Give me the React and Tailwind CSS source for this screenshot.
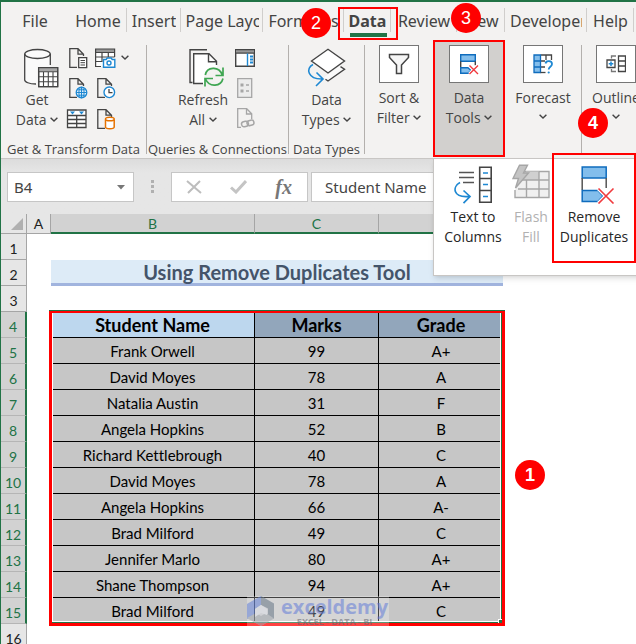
import React, { useState } from 'react';

const students = [
  { name: 'Frank Orwell', marks: 99, grade: 'A+' },
  { name: 'David Moyes', marks: 78, grade: 'A' },
  { name: 'Natalia Austin', marks: 31, grade: 'F' },
  { name: 'Angela Hopkins', marks: 52, grade: 'B' },
  { name: 'Richard Kettlebrough', marks: 40, grade: 'C' },
  { name: 'David Moyes', marks: 78, grade: 'A' },
  { name: 'Angela Hopkins', marks: 66, grade: 'A-' },
  { name: 'Brad Milford', marks: 49, grade: 'C' },
  { name: 'Jennifer Marlo', marks: 80, grade: 'A+' },
  { name: 'Shane Thompson', marks: 94, grade: 'A+' },
  { name: 'Brad Milford', marks: 49, grade: 'C' },
];

const tabs = [
  { label: 'File', width: 'w-[68px]', line: false },
  { label: 'Home', width: 'w-[58px]', line: true },
  { label: 'Insert', width: 'w-[54px]', line: true },
  { label: 'Page Layout', width: 'w-[82px]', line: true, clip: 'w-[73px]' },
  { label: 'Formulas', width: 'w-[81px]', line: true, step: 2 },
  { label: 'Data', width: 'w-[47px]', line: true, active: true },
  { label: 'Review', width: 'w-[66px]', line: true },
  { label: 'View', width: 'w-[48px]', line: true, step: 3 },
  { label: 'Developer', width: 'w-[82px]', line: true, clip: 'w-[72px]' },
  { label: 'Help', width: 'w-[47px]', line: true },
];

const Step = ({ n, className }) => (
  <span
    className={`absolute z-30 flex size-[30px] items-center justify-center rounded-full bg-[#ff0000] font-['Liberation_Sans',sans-serif] text-[18px] text-white ${className}`}
  >
    {n}
  </span>
);

const Chevron = ({ className = '' }) => (
  <svg width="8" height="5" viewBox="0 0 8 5" className={`inline-block ${className}`} fill="none" stroke="#444" strokeWidth="1.4">
    <path d="M.6.7 4 4 7.4.7" />
  </svg>
);

/* ---------- ribbon icons ---------- */

const Page = () => <path d="M8 19.3H.8V.7H9l5.5 5.5V8M9 .7v5.5h5.500" fill="none" stroke="#444" strokeWidth="1.3" />;

const Small = ({ children }) => (
  <svg width="20" height="20" viewBox="0 0 20 20" fill="none" className="overflow-visible">
    {children}
  </svg>
);

const DatabaseIcon = () => (
  <svg width="36" height="40" viewBox="0 0 36 40" fill="none" stroke="#444" strokeWidth="1.3">
    <path d="M1.7 6v25.500c0 2.500 5 4.500 12.500 4.500V19h13V6" fill="#fafafa" stroke="none" />
    <ellipse cx="14.500" cy="6" rx="12.800" ry="4.500" fill="#fafafa" />
    <path d="M1.700 6v26c0 2 4.500 4 11.300 4M27.300 6v11" />
    <path d="M15.700 19.700h19v19h-19z" fill="#fff" />
    <path d="M16 20h18.500v3.500H16z" fill="#a8a8a8" stroke="none" />
    <path d="M15.700 19.700h19v19h-19zM15.700 23.700h19M15.700 28.700h19M15.700 33.700h19M20.500 23.700v15M25.300 23.700v15M30 23.700v15" strokeWidth="1.100" />
  </svg>
);

const TextFileIcon = () => (
  <Small>
    <Page />
    <path d="M9.700 9.700h8v10h-8z" fill="#fff" stroke="#444" strokeWidth="1.300" />
    <path d="M11.500 12.500h4.500M11.500 14.700h4.500M11.500 17h4.500" stroke="#444" />
  </Small>
);

const PictureIcon = () => (
  <Small>
    <path d="M.6 1.500h19v17H.6z" fill="#fff" />
    <path d="M.6 1h19v3H.6z" fill="#999" />
    <path d="M6 18.500H.6V1h19v8M.6 4.500h19M.6 9h19M.6 13.500h6M7 4.500V9M13.300 4.500V9M7 9v5" stroke="#444" strokeWidth="1.200" />
    <path d="M8.500 11.500h2.700l1-1.500h4l1 1.500h2.600v7.700H8.500z" fill="#fff" stroke="#1e88d2" strokeWidth="1.400" />
    <circle cx="14" cy="15" r="2" stroke="#1e88d2" strokeWidth="1.400" />
  </Small>
);

const WebIcon = () => (
  <Small>
    <Page />
    <circle cx="12.500" cy="14.500" r="6.300" fill="#f3f2f1" />
    <circle cx="12.500" cy="14.500" r="5.300" fill="#e3f1fb" stroke="#1e88d2" strokeWidth="1.300" />
    <path d="M7.300 14.500h10.500M8.300 11.800h8.500M8.300 17.200h8.500M12.500 9v11" stroke="#1e88d2" />
    <ellipse cx="12.500" cy="14.500" rx="2.600" ry="5.300" stroke="#1e88d2" />
  </Small>
);

const RecentIcon = () => (
  <Small>
    <g transform="translate(2 0)">
      <Page />
      <circle cx="12.300" cy="14.300" r="6.300" fill="#f3f2f1" />
      <circle cx="12.300" cy="14.300" r="5.300" fill="#fff" stroke="#1e88d2" strokeWidth="1.400" />
      <path d="M12 11v3.700h3.500" stroke="#444" strokeWidth="1.300" />
    </g>
  </Small>
);

const RangeIcon = () => (
  <Small>
    <path d="M-1.500 1h18.500v17.500H-1.500z" fill="#fff" stroke="#444" strokeWidth="1.300" />
    <path d="M-1.500 6.500H17M-1.500 10.500H17M-1.500 14.500H17M7.700 6.500v12" stroke="#444" strokeWidth="1.300" />
    <path d="M1 2.500h5L3.500 5.500zM10 2.500h5l-2.500 3z" fill="#1e88d2" />
  </Small>
);

const ConnectionIcon = () => (
  <Small>
    <g transform="translate(2 0)">
      <Page />
      <path d="M8.500 10.500v7.500c0 2.300 8.700 2.300 8.700 0v-7.500" fill="#fff" stroke="#e57200" strokeWidth="1.500" />
      <ellipse cx="12.850" cy="10" rx="4.350" ry="1.800" fill="#fff" stroke="#e57200" strokeWidth="1.500" />
    </g>
  </Small>
);

const RefreshIcon = () => (
  <svg width="36" height="40" viewBox="0 0 36 40" fill="none" stroke="#444" strokeWidth="1.400">
    <path d="M3.500 34.500H1V1.700h17" />
    <path d="M5 36V5.700h15l8 8V20L15 36z" fill="#fff" stroke="none" />
    <path d="M14 35.500H4.700V5.700H20l7.500 7.500V17M19.500 5.700v8h8" />
    <circle cx="25" cy="29" r="10" fill="#f3f2f1" stroke="none" />
    <path d="M16.300 27c1.500-8 13.500-9.500 17 0M34 19.500v8h-7.500M34 30.500c-2 8-13.500 9.500-17.500.5M16 38.500v-8h8" stroke="#3fa652" strokeWidth="1.700" />
  </svg>
);

const PaneIcon = () => (
  <Small>
    <path d="M.7 1.700h18.600v16.600H.7z" fill="#fff" stroke="#444" strokeWidth="1.400" />
    <path d="M1 2h18v3H1z" fill="#999" />
    <path d="M.7 1.700h18.600M.7 5.200h18.600" stroke="#444" strokeWidth="1.200" />
    <path d="M12.500 5.500V18" stroke="#1e88d2" strokeWidth="1.400" />
    <path d="M15 8.500h3M15 11.500h3M15 14.500h3" stroke="#1e88d2" strokeWidth="1.800" />
  </Small>
);

const PropertiesIcon = () => (
  <Small>
    <path d="M2.700.7h14v18.600h-14z" fill="#ececec" stroke="#a6a6a6" strokeWidth="1.300" />
    <path d="M5.500 5.500h3v3h-3zM5.500 11.500h3v3h-3z" fill="#a6a6a6" />
    <path d="M11 7h3M11 13h3" stroke="#a6a6a6" strokeWidth="1.300" />
  </Small>
);

const EditLinksIcon = () => (
  <Small>
    <path d="M6 19.300H2.700V.7h9l5 5V11M11.500.7v5.300h5" stroke="#a6a6a6" strokeWidth="1.300" />
    <rect x="6.500" y="13.500" width="7" height="5" rx="2.500" transform="rotate(-15 10 16)" stroke="#a6a6a6" strokeWidth="1.500" />
    <rect x="12" y="12.500" width="7" height="5" rx="2.500" transform="rotate(-15 15 15)" stroke="#a6a6a6" strokeWidth="1.500" />
  </Small>
);

const DataTypesIcon = () => (
  <svg width="40" height="40" viewBox="0 0 40 40" fill="none" strokeWidth="1.400">
    <path d="M17 29.500 21 33l16.500-12-5-3z" fill="#fafafa" />
    <path d="M33.500 18.700l4 2.500L21 33l-2.500-1.800" stroke="#444" />
    <path d="M4.500 13 21 1.300 37.500 13 21 25z" fill="#fff" stroke="#444" />
    <path d="M6 16.500C-1.500 20 .5 31.500 15.500 31M9.500 24.500l6.500 6.500-7 7" stroke="#1e88d2" strokeWidth="1.600" />
  </svg>
);

const FunnelIcon = () => (
  <svg width="22" height="22" viewBox="0 0 22 22" fill="none" stroke="#444" strokeWidth="1.500">
    <path d="M1.500 1.500h19v3L13.500 12v8.500h-5V12l-7-7.500z" fill="#f6f6f6" />
  </svg>
);

const SmallDuplicatesIcon = () => (
  <svg width="20" height="22" viewBox="0 0 20 22" fill="none" strokeWidth="1.400">
    <path d="M1.700 1.700h14.600v6.600H1.700z" fill="#83beec" stroke="#0f6cbd" />
    <path d="M1.700 8.300v6M16.300 8.300v4" stroke="#444" />
    <path d="M1.700 14.700H9l3 2.800-3 2.800H1.700z" fill="#83beec" stroke="#0f6cbd" />
    <path d="M10.500 12.500l8.500 8.500M19 12.500L10.500 21" stroke="#fff" strokeWidth="3.400" />
    <path d="M10.500 12.500l8.500 8.500M19 12.500L10.500 21" stroke="#f03a3e" />
  </svg>
);

const DuplicatesIcon = () => (
  <svg width="34" height="38" viewBox="0 0 34 38" fill="none" strokeWidth="1.500">
    <path d="M1.200 1h24v11h-24z" fill="#83beec" stroke="#0f6cbd" />
    <path d="M1.200 12v12M25.200 12v10" stroke="#555" />
    <path d="M1.200 24.500H17l5 5.500-5 5.500H1.200z" fill="#83beec" stroke="#0f6cbd" />
    <path d="M17.500 22.500l15 15M32.500 22.500l-15 15" stroke="#fff" strokeWidth="4" />
    <path d="M17.500 22.500l15 15M32.500 22.500l-15 15" stroke="#f03a3e" strokeWidth="1.600" />
  </svg>
);

const ForecastIcon = () => (
  <svg width="20" height="20" viewBox="0 0 20 20" fill="none" strokeWidth="1.300">
    <path d="M7.500 1H18.500v5" stroke="#444" />
    <path d="M13 1v5M7.500 7H12M7.500 13H12" stroke="#444" />
    <path d="M1 1h6.500v17.500H1z" fill="#83beec" stroke="#0f6cbd" />
    <path d="M1 7h6.500M1 13h6.500" stroke="#0f6cbd" />
    <path d="M7.500 18.500h5" stroke="#444" />
    <path d="M12.500 9.500c.5-3.500 6.500-3 6.500.5 0 2.800-3.300 2.700-3.300 5.500" stroke="#1e88d2" strokeWidth="1.800" />
    <circle cx="15.700" cy="18.500" r="1.100" fill="#1e88d2" />
  </svg>
);

const OutlineIcon = () => (
  <svg width="20" height="18" viewBox="0 0 20 18" fill="none" stroke="#444" strokeWidth="1.300">
    <path d="M12.500 1h7v15.500h-7zM12.500 6h7M12.500 11h7" />
    <path d="M5.500 3.500V1H10M5.500 14v2.500H10" stroke="#777" />
    <path d="M1 5h8v7.500H1z" fill="#fff" />
    <path d="M5 6.500V11M2.700 8.700h4.600" stroke="#1e88d2" strokeWidth="1.500" />
  </svg>
);

const TextToColumnsIcon = () => (
  <svg width="38" height="38" viewBox="0 0 38 38" fill="none" strokeWidth="1.400">
    <path d="M5 6.500h15M5 11.500h15M9 16.500h11" stroke="#555" />
    <path d="M25.700 1.200h11.500v35H25.700zM25.700 12.500h11.500M25.700 24.500h11.500" stroke="#444" strokeWidth="1.600" />
    <path d="M29 7h5M29 18.500h5M29 30.500h5" stroke="#1e88d2" strokeWidth="1.600" />
    <path d="M6 16.500C-2 21-1 32 15 30.500M9.500 24.500l6.500 6-6.500 6.700" stroke="#1e88d2" strokeWidth="1.700" />
  </svg>
);

const FlashFillIcon = () => (
  <svg width="38" height="36" viewBox="0 0 38 36" fill="none" stroke="#a6a6a6" strokeWidth="1.400">
    <path d="M13 7.500h24v26H3V26" fill="#f0f0f0" />
    <path d="M14 7.500h13v8.500H10z" fill="#d0d0d0" stroke="none" />
    <path d="M10 16h27M6 25h31M27 7.500v26M14.500 16v17.500" />
    <path d="M7.500 1.200h8L11.500 9h5L3.500 24l3-9.500H1z" fill="#c4c4c4" />
  </svg>
);

const Watermark = () => (
  <div className="absolute -bottom-[3px] left-[195px] flex h-[30px] w-[142px] items-center gap-[6px] bg-white/40 opacity-65">
    <svg width="28" height="30" viewBox="0 0 28 30" className="shrink-0">
      <path d="M14 0 27 7.500v15L14 30 0 22V8z" fill="#d3d6dc" />
      <path d="M14 0v9l-6 4v8l-8 2V8z" fill="#7f98e0" />
      <path d="M14 0l13 7.500V23l-6-3.500v-7L14 9z" fill="#7f8c9a" />
      <path d="M0 22l9-5 5 3 5-3 8 5.500L14 30z" fill="#aeb4bb" />
      <path d="M8 13l6-4 6 4v6l-6-2-6 4z" fill="#e4e7ee" />
    </svg>
    <div className="flex flex-col font-['Open_Sans',sans-serif] font-bold">
      <span className="text-[20px] leading-[20px] text-[#7d93e0]">exceldemy</span>
      <span className="text-center text-[9px] leading-[9px] text-[#808088]">EXCEL - DATA - BI</span>
    </div>
  </div>
);

/* ---------- ribbon ---------- */

const Divider = () => <div className="mt-[5px] h-[109px] w-px shrink-0 bg-[#b3b0ad]" />;

const GroupLabel = ({ children }) => (
  <div className="absolute inset-x-0 bottom-0 flex h-4 items-center justify-center whitespace-nowrap text-[13px]">{children}</div>
);

const BoxedButton = ({ icon, children }) => (
  <button className="flex w-full flex-col items-center pt-[5px] leading-5">
    <span className="mb-[5px] flex h-[38px] w-10 shrink-0 items-center justify-center border border-[#767676] bg-white">{icon}</span>
    {children}
  </button>
);

const Ribbon = () => (
  <div className="relative flex h-[119px] border-b border-[#c8c6c4] font-['Open_Sans',sans-serif] text-[14px] text-[#444]">
    <div className="relative w-[145px] shrink-0">
      <div className="flex pt-[7px]">
        <button className="ml-3 flex w-[48px] flex-col items-center whitespace-nowrap leading-5">
          <span className="ml-2 mt-px"><DatabaseIcon /></span>
          <span className="mt-[2px]">Get</span>
          <span>Data <Chevron className="mb-[3px]" /></span>
        </button>
        <div className="ml-2 grid grid-cols-[20px_20px] gap-x-[6px] gap-y-[9px]">
          <button aria-label="From Text/CSV"><TextFileIcon /></button>
          <button aria-label="From Picture"><PictureIcon /></button>
          <button aria-label="From Web"><WebIcon /></button>
          <button aria-label="Recent Sources"><RecentIcon /></button>
          <button aria-label="From Table/Range"><RangeIcon /></button>
          <button aria-label="Existing Connections"><ConnectionIcon /></button>
        </div>
        <Chevron className="ml-[6px] mt-2" />
      </div>
      <GroupLabel>Get &amp; Transform Data</GroupLabel>
    </div>
    <Divider />
    <div className="relative w-[141px] shrink-0">
      <div className="flex pt-2">
        <button className="ml-[30px] flex w-[52px] flex-col items-center whitespace-nowrap leading-5">
          <span className="ml-2"><RefreshIcon /></span>
          <span className="mt-[2px]">Refresh</span>
          <span>All <Chevron className="mb-[3px]" /></span>
        </button>
        <div className="ml-[6px] flex flex-col gap-[10px]">
          <button aria-label="Queries &amp; Connections"><PaneIcon /></button>
          <button aria-label="Properties"><PropertiesIcon /></button>
          <button aria-label="Edit Links"><EditLinksIcon /></button>
        </div>
      </div>
      <GroupLabel>Queries &amp; Connections</GroupLabel>
    </div>
    <Divider />
    <div className="relative w-[75px] shrink-0">
      <button className="flex w-full flex-col items-center whitespace-nowrap pt-2 leading-5">
        <DataTypesIcon />
        <span className="mt-[2px]">Data</span>
        <span>Types <Chevron className="mb-[3px]" /></span>
      </button>
      <GroupLabel>Data Types</GroupLabel>
    </div>
    <Divider />
    <div className="w-[68px] shrink-0">
      <BoxedButton icon={<FunnelIcon />}>
        <span>Sort &amp;</span>
        <span>Filter <Chevron className="mb-[3px]" /></span>
      </BoxedButton>
    </div>
    <div className="relative h-[117px] w-[72px] shrink-0 bg-[#d2d0ce] outline-2 -outline-offset-2 outline-[#ff0000]">
      <BoxedButton icon={<SmallDuplicatesIcon />}>
        <span>Data</span>
        <span>Tools <Chevron className="mb-[3px]" /></span>
      </BoxedButton>
      <ToolsMenu />
    </div>
    <div className="w-[76px] shrink-0">
      <BoxedButton icon={<ForecastIcon />}>
        <span>Forecast</span>
        <Chevron className="mt-[6px]" />
      </BoxedButton>
    </div>
    <Divider />
    <div className="relative w-[68px] shrink-0">
      <BoxedButton icon={<OutlineIcon />}>
        <span>Outline</span>
        <Chevron className="mt-[6px]" />
      </BoxedButton>
      <Step n={4} className="-left-1 top-[68px] font-bold" />
    </div>
  </div>
);

const ToolsMenu = () => (
  <div className="absolute left-0 top-[118px] z-20 flex h-[118px] w-[210px] items-start border border-[#c8c6c4] bg-white text-[#262626] shadow-md">
    <button className="flex w-[78px] flex-col items-center pt-[7px] leading-5">
      <TextToColumnsIcon />
      <span className="mt-[3px]">Text to</span>
      <span>Columns</span>
    </button>
    <button disabled className="flex w-[38px] flex-col items-center pt-[5px] leading-5 text-[#b1b1b1]">
      <FlashFillIcon />
      <span className="mt-[7px]">Flash</span>
      <span>Fill</span>
    </button>
    <button className="-mt-[6px] ml-[2px] flex h-[110px] w-[84px] flex-col items-center border-2 border-[#ff0000] pt-[11px] leading-5">
      <span className="ml-2"><DuplicatesIcon /></span>
      <span className="mt-[3px]">Remove</span>
      <span>Duplicates</span>
    </button>
  </div>
);

const TabStrip = () => (
  <div className="flex h-[38px] text-[16px] text-[#444]">
    {tabs.map((tab) => (
      <div key={tab.label} className={`relative flex shrink-0 ${tab.width}`}>
        <button className="flex h-full w-full items-center justify-center whitespace-nowrap">
          <span className={`block overflow-hidden ${tab.clip || ''} ${tab.active ? 'font-bold' : ''}`}>{tab.label}</span>
        </button>
        {tab.line && <span className="absolute right-0 top-[6px] h-6 w-px bg-[#d0cecc]" />}
        {tab.active && (
          <>
            <span className="absolute bottom-[3px] left-[6px] h-1 w-[37px] bg-[#217346]" />
            <span className="absolute -left-[6px] top-[5px] h-[33px] w-[60px] border-2 border-[#ff0000]" />
          </>
        )}
        {tab.step === 2 && <Step n={2} className="left-[38px] top-[6px]" />}
        {tab.step === 3 && <Step n={3} className="-left-[6px] top-px" />}
      </div>
    ))}
  </div>
);

const FormulaBar = () => {
  const [cell, setCell] = useState('B4');
  const [formula, setFormula] = useState('Student Name');

  return (
    <div className="flex h-[55px] items-start bg-linear-to-b from-[#dcdcdc] to-[#e6e6e6] to-25% pl-[6px] pt-[13px] text-[15px] text-[#444]">
      <div className="flex h-[30px] w-[127px] shrink-0 items-center border border-[#c6c6c6] bg-white px-[6px]">
        <input aria-label="Name Box" value={cell} onChange={(e) => setCell(e.target.value)} className="w-full min-w-0 outline-none" />
        <svg width="8" height="5" viewBox="0 0 8 5" className="mr-[2px] shrink-0"><path d="M0 0h8L4 4.500z" fill="#777" /></svg>
      </div>
      <div className="mx-4 mt-2 flex w-[5px] shrink-0 flex-col items-center gap-[2px]">
        <span className="size-[3px] bg-[#b0b0b0]" />
        <span className="size-[3px] bg-[#b0b0b0]" />
        <span className="size-[3px] bg-[#b0b0b0]" />
      </div>
      <div className="flex h-[30px] w-[137px] shrink-0 items-center justify-between border border-[#c6c6c6] bg-white pl-[14px] pr-[15px]">
        <button aria-label="Cancel">
          <svg width="16" height="14" viewBox="0 0 16 14" fill="none" stroke="#bdbdbd" strokeWidth="2"><path d="M1 1l14 12M14 1L2 13" /></svg>
        </button>
        <button aria-label="Enter">
          <svg width="17" height="14" viewBox="0 0 17 14" fill="none" stroke="#c4c4c4" strokeWidth="3"><path d="M1 7.500l5 4.500L16 1" /></svg>
        </button>
        <button aria-label="Insert Function" className="font-['Liberation_Serif',serif] text-[20px] font-bold italic leading-5 text-[#777]">fx</button>
      </div>
      <input
        aria-label="Formula Bar"
        value={formula}
        onChange={(e) => setFormula(e.target.value)}
        className="ml-[3px] h-[30px] min-w-0 flex-1 border border-[#c6c6c6] bg-white px-[13px] outline-none"
      />
    </div>
  );
};

/* ---------- worksheet ---------- */

const RowHeader = ({ n, selected }) => (
  <th
    scope="row"
    className={`border-b p-0 pt-1 text-center text-[14px] font-normal leading-5 ${
      selected ? 'border-r-2 border-b-[#b5b5b5] border-r-[#217346] bg-[#d2d2d2] text-[#217346]' : 'border-r border-b-[#a5a5a5] border-r-[#a5a5a5] bg-[#e6e6e6] text-[#222]'
    }`}
  >
    {n}
  </th>
);

const EmptyRow = ({ n }) => (
  <tr className="h-[26px]">
    <RowHeader n={n} />
    <td colSpan={5} />
  </tr>
);

const Sheet = () => (
  <div className="relative font-['Lato',sans-serif] text-[15px] text-black [font-variant-ligatures:none]">
    <table className="w-full table-fixed border-separate border-spacing-0">
      <colgroup>
        <col className="w-[26px]" />
        <col className="w-6" />
        <col className="w-[204px]" />
        <col className="w-[124px]" />
        <col className="w-[124px]" />
        <col />
      </colgroup>
      <thead>
        <tr className="h-5 bg-[#e6e6e6] text-[14px] leading-[17px] text-[#217346]">
          <th className="border-b border-r border-[#a5a5a5] p-0">
            <svg width="12" height="12" viewBox="0 0 12 12" className="ml-[10px]"><path d="M12 0v12H0z" fill="#b0b0b0" /></svg>
          </th>
          <th scope="col" className="border-b border-r border-[#a5a5a5] p-0 font-normal text-[#222]">A</th>
          <th scope="col" className="border-b-2 border-r border-b-[#217346] border-r-[#a5a5a5] bg-[#d2d2d2] p-0 font-normal">B</th>
          <th scope="col" className="border-b-2 border-r border-b-[#217346] border-r-[#a5a5a5] bg-[#d2d2d2] p-0 font-normal">C</th>
          <th scope="col" className="border-b-2 border-r border-b-[#217346] border-r-[#a5a5a5] bg-[#d2d2d2] p-0 font-normal">D</th>
          <th className="border-b border-[#a5a5a5] p-0" />
        </tr>
      </thead>
      <tbody>
        <EmptyRow n={1} />
        <tr className="h-[26px]">
          <RowHeader n={2} />
          <td />
          <td colSpan={3} className="border-b-[3px] border-[#a1b4de] bg-[#ddebf7] p-0 text-center text-[20px] font-bold leading-[22px] text-[#44546a]">
            Using Remove Duplicates Tool
          </td>
          <td />
        </tr>
        <EmptyRow n={3} />
        <tr className="h-[26px] text-[18px] font-bold leading-5">
          <RowHeader n={4} selected />
          <td />
          <th scope="col" className="border-b border-r border-black bg-[#bdd7ee] p-0">Student Name</th>
          <th scope="col" className="border-b border-r border-black bg-[#92a6bb] p-0">Marks</th>
          <th scope="col" className="border-b border-black bg-[#92a6bb] p-0">Grade</th>
          <td />
        </tr>
        {students.map((s, i) => (
          <tr key={i} className="h-[26px] text-center leading-5">
            <RowHeader n={i + 5} selected />
            <td />
            <td className="border-b border-r border-black bg-[#c6c6c6] p-0">{s.name}</td>
            <td className="border-b border-r border-black bg-[#c6c6c6] p-0">{s.marks}</td>
            <td className="border-b border-black bg-[#c6c6c6] p-0">{s.grade}</td>
            <td />
          </tr>
        ))}
        <EmptyRow n={16} />
      </tbody>
    </table>

    {/* selection frame */}
    <div className="absolute left-[48px] top-[97px] h-[315px] w-[456px] border-[3px] border-t-2 border-[#ff0000] shadow-[0_-1px_0_#217346]">
      <div className="h-full border-b border-r border-[#217346]">
        <div className="h-full border border-t-0 border-white" />
      </div>
      <span className="absolute bottom-0 right-0 size-1 border-l border-t border-white bg-[#217346]" />
      <Watermark />
    </div>
    <Step n={1} className="left-[514px] top-[246px] font-bold" />
  </div>
);

const App = () => (
  <div className="max-h-screen min-h-screen overflow-hidden border-l border-t-2 border-[#217346] bg-white font-['Noto_Sans',sans-serif]">
    <div className="bg-[#f3f2f1]">
      <TabStrip />
      <Ribbon />
    </div>
    <FormulaBar />
    <Sheet />
  </div>
);

export default App;
